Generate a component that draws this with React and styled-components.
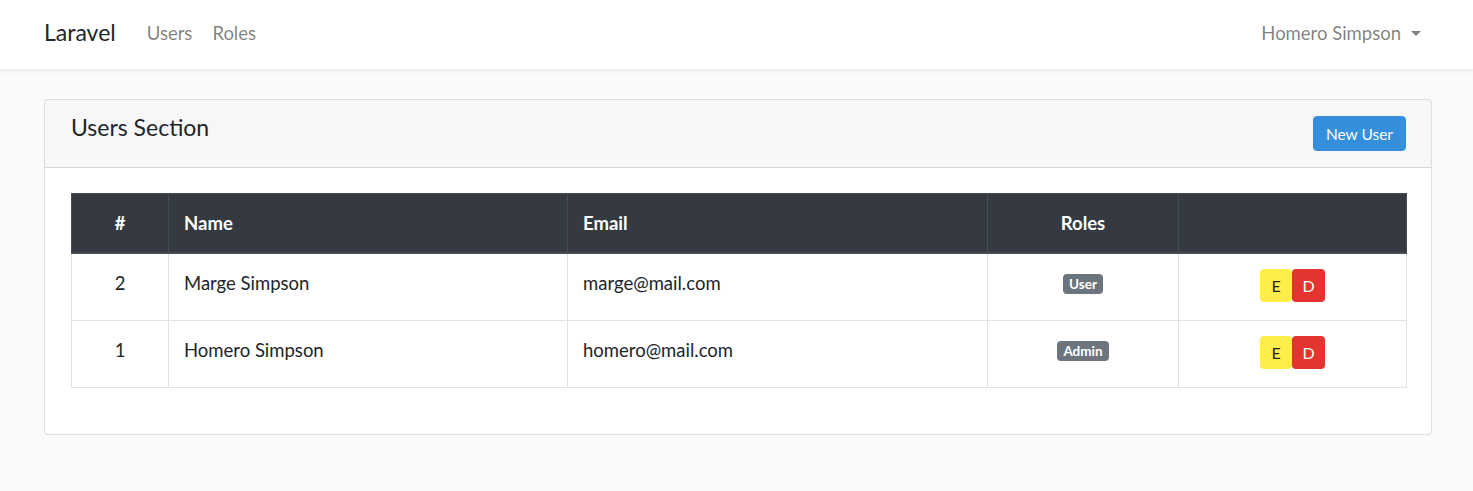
import styled, { createGlobalStyle } from 'styled-components';

const GlobalStyle = createGlobalStyle`
  body {
    margin: 0;
    background: #f8fafc;
    font-family: "Lato", "Noto Sans", sans-serif;
    color: #212529;
  }
`;

const users = [
  { id: 2, name: 'Marge Simpson', email: 'marge@mail.com', role: 'User' },
  { id: 1, name: 'Homero Simpson', email: 'homero@mail.com', role: 'Admin' },
];

export default function App() {
  return (
    <>
      <GlobalStyle />
      <Navbar>
        <Brand>Laravel</Brand>
        <NavLinks>
          <NavLink>Users</NavLink>
          <NavLink>Roles</NavLink>
        </NavLinks>
        <UserMenu>
          Homero Simpson
          <Caret />
        </UserMenu>
      </Navbar>
      <Main>
        <Card>
          <CardHeader>
            <Title>Users Section</Title>
            <PrimaryButton>New User</PrimaryButton>
          </CardHeader>
          <CardBody>
            <Table>
              <colgroup>
                <col style={{ width: 97 }} />
                <col style={{ width: 399 }} />
                <col style={{ width: 420 }} />
                <col style={{ width: 191 }} />
                <col style={{ width: 228 }} />
              </colgroup>
              <thead>
                <tr>
                  <Th center>#</Th>
                  <Th>Name</Th>
                  <Th>Email</Th>
                  <Th center>Roles</Th>
                  <Th></Th>
                </tr>
              </thead>
              <tbody>
                {users.map((u) => (
                  <tr key={u.id}>
                    <Td center>{u.id}</Td>
                    <Td>{u.name}</Td>
                    <Td>{u.email}</Td>
                    <Td center pb={8}>
                      <Badge>{u.role}</Badge>
                    </Td>
                    <Td center pb={2}>
                      <ActionGroup>
                        <ActionButton variant="edit">E</ActionButton>
                        <ActionButton variant="delete">D</ActionButton>
                      </ActionGroup>
                    </Td>
                  </tr>
                ))}
              </tbody>
            </Table>
          </CardBody>
        </Card>
      </Main>
    </>
  );
}

const Navbar = styled.nav`
  height: 69px;
  background: #fff;
  box-shadow: 0 2px 4px rgba(0, 0, 0, 0.075);
  display: flex;
  align-items: center;
  padding: 0 52px 3px 44px;
  box-sizing: border-box;
`;

const Brand = styled.div`
  font-size: 23px;
  color: #212529;
  margin-right: 31px;
  margin-top: -2px;
`;

const NavLinks = styled.div`
  display: flex;
  gap: 20px;
  flex: 1;
`;

const NavLink = styled.span`
  font-size: 18.5px;
  color: rgba(0, 0, 0, 0.5);
`;

const UserMenu = styled.div`
  font-size: 18.5px;
  color: rgba(0, 0, 0, 0.5);
  display: flex;
  align-items: center;
`;

const Caret = styled.span`
  margin-left: 10px;
  width: 0;
  height: 0;
  border-left: 5px solid transparent;
  border-right: 5px solid transparent;
  border-top: 5px solid rgba(0, 0, 0, 0.5);
  margin-top: 1px;
`;

const Main = styled.main`
  padding: 30px 41px 56px 44px;
`;

const Card = styled.div`
  background: #fff;
  border: 1px solid rgba(0, 0, 0, 0.125);
  border-radius: 4px;
`;

const CardHeader = styled.div`
  height: 68px;
  box-sizing: border-box;
  background: rgba(0, 0, 0, 0.03);
  border-bottom: 1px solid rgba(0, 0, 0, 0.125);
  display: flex;
  justify-content: space-between;
  align-items: flex-start;
  padding: 12px 25px 0 26px;
`;

const Title = styled.h2`
  margin: 0;
  font-size: 23px;
  font-weight: 400;
  line-height: 30px;
`;

const PrimaryButton = styled.button`
  margin-top: 4px;
  height: 35px;
  padding: 0 12px;
  background: #3490dc;
  border: 1px solid #3490dc;
  border-radius: 4px;
  color: #fff;
  font-family: inherit;
  font-size: 15.5px;
`;

const CardBody = styled.div`
  padding: 25px 25px 46px 26px;
`;

const Table = styled.table`
  width: 100%;
  border-collapse: collapse;
  table-layout: fixed;
  font-size: 18.5px;
`;

const Th = styled.th`
  height: 58px;
  padding: 0 15px;
  background: #343a40;
  color: #fff;
  border: 1px solid #454d55;
  border-bottom: 2px solid #454d55;
  font-weight: 700;
  text-align: ${(p) => (p.center ? 'center' : 'left')};
  vertical-align: middle;
`;

const Td = styled.td`
  height: 67px;
  box-sizing: border-box;
  padding: 0 15px ${(p) => (p.pb !== undefined ? p.pb : 8)}px;
  border: 1px solid #dee2e6;
  text-align: ${(p) => (p.center ? 'center' : 'left')};
  vertical-align: middle;
`;

const Badge = styled.span`
  display: inline-block;
  padding: 3px 6px;
  background: #6c757d;
  color: #fff;
  font-size: 13.5px;
  font-weight: 700;
  line-height: 14px;
  border-radius: 4px;
`;

const ActionGroup = styled.div`
  display: inline-flex;
  vertical-align: middle;
`;

const ActionButton = styled.button`
  height: 33px;
  width: ${(p) => (p.variant === 'edit' ? '32px' : '33px')};
  padding: 0;
  border: none;
  border-radius: 4px;
  font-family: inherit;
  font-size: 16px;
  background: ${(p) => (p.variant === 'edit' ? '#ffed4a' : '#e3342f')};
  color: ${(p) => (p.variant === 'edit' ? '#212529' : '#fff')};
`;
